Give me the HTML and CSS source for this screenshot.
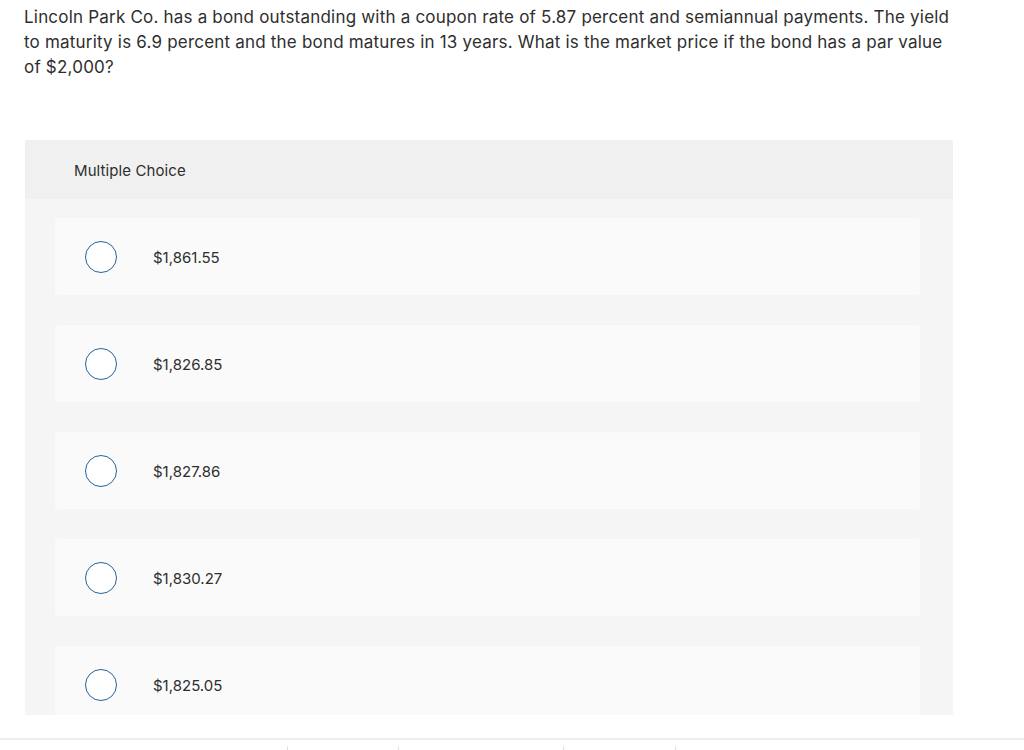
FILE: index.html
```html
<!DOCTYPE html>
<html>
<head>
<meta charset="utf-8">
<link rel="stylesheet" href="styles.css">
</head>
<body>
<div class="viewport">
  <p class="question">Lincoln Park Co. has a bond outstanding with a coupon rate of 5.87 percent and semiannual payments. The yield<br>to maturity is 6.9 percent and the bond matures in 13 years. What is the market price if the bond has a par value<br>of $2,000?</p>
  <section class="panel">
    <div class="panel-head">Multiple Choice</div>
    <div class="panel-body">
      <label class="option"><span class="radio"></span><span class="opt-text">$1,861.55</span></label>
      <label class="option"><span class="radio"></span><span class="opt-text">$1,826.85</span></label>
      <label class="option"><span class="radio"></span><span class="opt-text">$1,827.86</span></label>
      <label class="option"><span class="radio"></span><span class="opt-text">$1,830.27</span></label>
      <label class="option"><span class="radio"></span><span class="opt-text">$1,825.05</span></label>
    </div>
  </section>
</div>
<footer class="footer">
  <div class="seg s1"></div>
  <div class="seg s2"></div>
  <div class="seg s3"></div>
  <div class="seg s4"></div>
  <div class="seg s5"></div>
</footer>
</body>
</html>
```
FILE: styles.css
```css
html, body {
  margin: 0;
  padding: 0;
  background: #fff;
}
body {
  font-family: "Inter", "Open Sans", sans-serif;
  color: #2e2e2e;
  width: 1024px;
  height: 750px;
  overflow: hidden;
}
.viewport {
  height: 715px;
  overflow: hidden;
}
.question {
  margin: 0;
  padding: 5px 24px 0 24px;
  font-size: 17px;
  letter-spacing: 0.2px;
  line-height: 25px;
  white-space: nowrap;
}
.panel {
  margin: 60px 0 0 25px;
  width: 928px;
  background: #f5f5f5;
  border-radius: 3px 3px 0 0;
}
.panel-head {
  height: 59px;
  background: #f0f0f0;
  border-radius: 3px 3px 0 0;
  display: flex;
  align-items: center;
  padding-left: 49px;
  font-size: 15px;
  letter-spacing: 0.1px;
  padding-top: 1px;
  box-sizing: border-box;
}
.panel-body {
  display: flex;
  flex-direction: column;
  gap: 30px;
  padding: 19px 33px 40px 30px;
}
.option {
  height: 77px;
  background: #fafafa;
  border-radius: 3px;
  display: flex;
  align-items: center;
  padding-left: 30px;
  box-sizing: border-box;
}
.radio {
  width: 32px;
  height: 32px;
  box-sizing: border-box;
  border: 1.5px solid #27639a;
  border-radius: 50%;
  background: #fff;
  flex: none;
}
.opt-text {
  margin-left: 36px;
  font-size: 15px;
  padding-top: 1px;
}
.footer {
  margin-top: 23px;
  border-top: 2px solid #eeeeee;
  display: flex;
  height: 12px;
  padding-top: 6px;
  box-sizing: border-box;
}
.seg {
  height: 100%;
  border-left: 1px solid #e2e2e2;
}
.s1 { width: 287px; border-left: none; }
.s2 { width: 110px; }
.s3 { width: 164px; }
.s4 { width: 111px; }
.s5 { flex: 1; }
```
